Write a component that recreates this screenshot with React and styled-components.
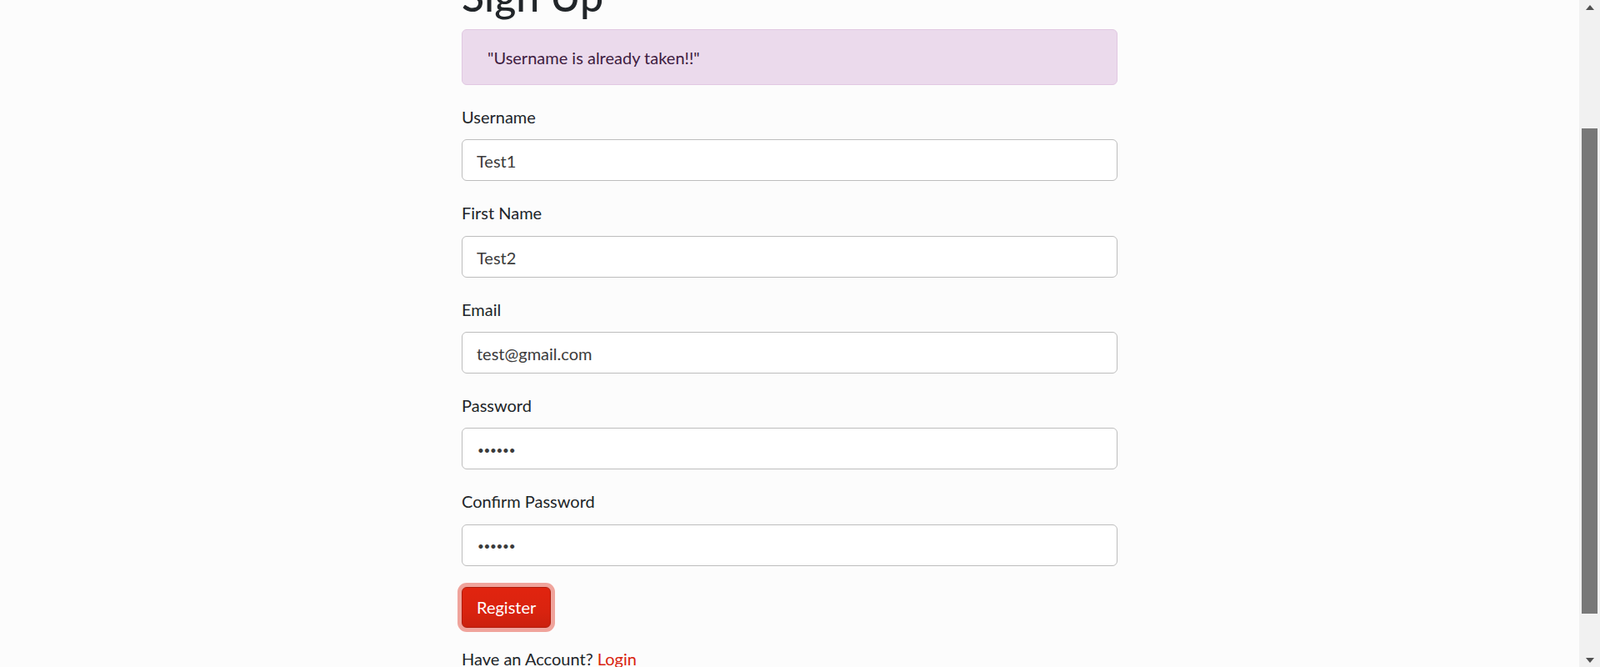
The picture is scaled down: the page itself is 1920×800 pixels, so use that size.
import styled, { createGlobalStyle } from "styled-components"

const GlobalStyle = createGlobalStyle`
    html, body {
        margin: 0;
        padding: 0;
        height: 100%;
        overflow: hidden;
        background: #fcfcfc;
        font-family: Lato, "Liberation Sans", sans-serif;
        color: #212529;
    }
`

const Screen = styled.div`
    display: flex;
    height: 100vh;
`

const Main = styled.main`
    flex: 1;
    overflow: hidden;
`

const Container = styled.div`
    width: 787px;
    margin: 0 auto;
`

const Title = styled.h1`
    margin: -35px 0 10px;
    font-size: 50px;
    line-height: 60px;
    font-weight: 500;
    color: #212529;
`

const Alert = styled.div`
    margin-bottom: 22.8px;
    padding: 17.5px 30px;
    border: 1px solid #e1c8e2;
    border-radius: 6px;
    background: #ebdaec;
    color: #3e1c40;
    font-size: 20px;
    line-height: 30px;
`

const Group = styled.div`
    margin-bottom: 23px;
`

const Label = styled.label`
    display: block;
    margin-bottom: 12.4px;
    font-size: 20px;
    line-height: 30px;
`

const Input = styled.input`
    display: block;
    box-sizing: border-box;
    width: 100%;
    height: 50px;
    padding: ${p => (p.$secret ? "3px 17px 0 18px" : "2px 17px 0")};
    border: 1px solid #bdbdbd;
    border-radius: 6px;
    background: #fff;
    color: #3b3b3b;
    font-family: inherit;
    font-size: ${p => (p.$secret ? "13.5px" : "20px")};
    letter-spacing: ${p => (p.$secret ? "-0.3px" : "normal")};
    outline: none;
`

const Button = styled.button`
    margin-top: 2px;
    height: 49px;
    padding: 0 17px;
    border: 1px solid #b01c0c;
    border-radius: 6px;
    background-image: linear-gradient(#e1240f, #d9230f 60%, #cb210e);
    color: #fff;
    font-family: inherit;
    font-size: 20px;
    box-shadow: 0 0 0 5px #f0a49c;
    cursor: pointer;
`

const Footer = styled.p`
    margin: 22.5px 0 0;
    font-size: 20px;
    line-height: 30px;
`

const Link = styled.a`
    color: #d9230f;
    text-decoration: none;
`

const Scrollbar = styled.div`
    width: 25px;
    display: flex;
    flex-direction: column;
    align-items: center;
    background: #f1f1f1;
`

const Arrow = styled.div`
    height: ${p => p.$h}px;
    display: flex;
    align-items: center;
    justify-content: center;
`

const Track = styled.div`
    flex: 1;
    align-self: stretch;
    padding: 0 3px;
`

const Thumb = styled.div`
    margin-top: ${p => p.$top}px;
    height: ${p => p.$size}px;
    background: #787878;
`

const fields = [
    { label: "Username", type: "text", value: "Test1" },
    { label: "First Name", type: "text", value: "Test2" },
    { label: "Email", type: "email", value: "test@gmail.com" },
    { label: "Password", type: "password", value: "123456" },
    { label: "Confirm Password", type: "password", value: "123456" },
]

export default function App() {
    return (
        <>
            <GlobalStyle />
            <Screen>
                <Main>
                    <Container>
                        <Title>Sign Up</Title>
                        <Alert>"Username is already taken!!"</Alert>
                        <form onSubmit={e => e.preventDefault()}>
                            {fields.map(f => (
                                <Group key={f.label}>
                                    <Label>{f.label}</Label>
                                    <Input
                                        type={f.type}
                                        defaultValue={f.value}
                                        $secret={f.type === "password"}
                                        readOnly
                                    />
                                </Group>
                            ))}
                            <Button type="submit">Register</Button>
                        </form>
                        <Footer>
                            Have an Account? <Link href="#">Login</Link>
                        </Footer>
                    </Container>
                </Main>
                <Scrollbar>
                    <Arrow $h={17}>
                        <svg width="10" height="6" viewBox="0 0 10 6"><path d="M0 6 L5 0 L10 6 Z" fill="#505050" /></svg>
                    </Arrow>
                    <Track>
                        <Thumb $top={137} $size={582} />
                    </Track>
                    <Arrow $h={17}>
                        <svg width="10" height="6" viewBox="0 0 10 6"><path d="M0 0 L5 6 L10 0 Z" fill="#505050" /></svg>
                    </Arrow>
                </Scrollbar>
            </Screen>
        </>
    )
}
